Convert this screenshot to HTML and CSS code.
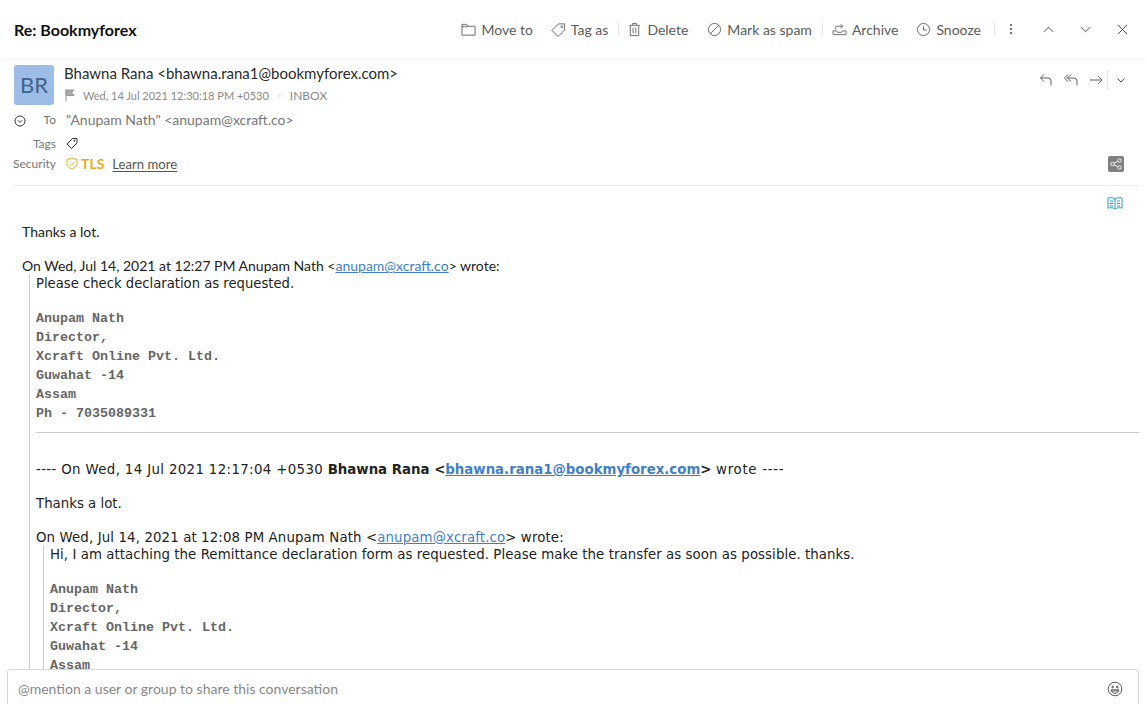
FILE: index.html
```html
<!DOCTYPE html>
<html lang="en">
<head>
<meta charset="utf-8">
<title>Re: Bookmyforex</title>
<link rel="stylesheet" href="styles.css">
</head>
<body>
<header class="topbar">
  <h1 class="subject">Re: Bookmyforex</h1>
  <nav class="actions">
    <span class="action tight"><svg class="ic" viewBox="0 0 16 16"><path d="M1 14V2.500h5l1.500 2H15V14zM1 5h6.500"/></svg>Move to</span>
    <span class="action"><svg class="ic" viewBox="0 0 16 16"><path d="M1 9l7-7h6.500v6.500l-7 7z"/><circle cx="11.500" cy="5" r="1"/></svg>Tag as</span>
    <i class="sep sep-first"></i>
    <span class="action"><svg class="ic" viewBox="0 0 16 16"><path d="M2.500 3.500h11M6 3.500v-2h4v2M3.500 3.500v11h9v-11M6.500 6v6M9.500 6v6"/></svg>Delete</span>
    <span class="action"><svg class="ic" viewBox="0 0 16 16"><circle cx="8" cy="8" r="6.500"/><path d="M3.500 12.500l9-9"/></svg>Mark as spam</span>
    <i class="sep"></i>
    <span class="action tight"><svg class="ic" viewBox="0 0 16 16"><path d="M1 9.500h4l1 1.500h4l1-1.500h4v3a1 1 0 0 1-1 1H2a1 1 0 0 1-1-1zM4 8V5.500a1 1 0 0 1 1-1h6M9 2.500l2.500 2-2.500 2"/></svg>Archive</span>
    <span class="action"><svg class="ic" viewBox="0 0 16 16"><circle cx="8" cy="8" r="6.500"/><path d="M8 4v4.500h3.500"/></svg>Snooze</span>
    <i class="sep sep-last"></i>
    <span class="dots"><b></b><b></b><b></b></span>
    <svg class="nav-ic" viewBox="0 0 12 12"><path d="M1 8.500l5-5 5 5"/></svg>
    <svg class="nav-ic" viewBox="0 0 12 12"><path d="M1 3.500l5 5 5-5"/></svg>
    <svg class="nav-ic" viewBox="0 0 12 12"><path d="M1 1l10 10M11 1L1 11"/></svg>
  </nav>
</header>

<section class="meta">
  <div class="meta-top">
    <div class="avatar">BR</div>
    <div class="sender">
      <div class="from">Bhawna Rana &lt;bhawna.rana1@bookmyforex.com&gt;</div>
      <div class="dateline">
        <svg class="flag" viewBox="0 0 10 13"><path d="M1 0.500v12M1 1h8L6.500 3.500 9 6.500H1z"/></svg>
        <span class="date">Wed, 14 Jul 2021 12:30:18 PM +0530</span><i class="dot"></i><span class="folder">INBOX</span>
      </div>
    </div>
    <div class="replies">
      <svg class="rp" viewBox="0 0 14 14"><path d="M5 1.500L1.500 5 5 8.500M1.500 5H9a3 3 0 0 1 3 3v4.500"/></svg>
      <svg class="rp" viewBox="0 0 14 14"><path d="M4 1.500L.5 5 4 8.500M7 1.500L3.500 5 7 8.500M3.500 5H10a3 3 0 0 1 3 3v4.500"/></svg>
      <svg class="rp" viewBox="0 0 14 14"><path d="M9 3l4 4-4 4M13 7H1"/></svg>
      <i class="rp-sep"></i>
      <svg class="rp-more" viewBox="0 0 10 10"><path d="M1.500 3.500L5 7l3.500-3.500"/></svg>
    </div>
  </div>
  <div class="row row-to">
    <svg class="expand" viewBox="0 0 12 12"><circle cx="6" cy="6" r="5"/><path d="M3.800 5.200L6 7.400l2.200-2.200"/></svg>
    <span class="lab">To</span><span class="to-val">"Anupam Nath" &lt;anupam@xcraft.co&gt;</span>
  </div>
  <div class="row row-tags">
    <span class="lab lab-full">Tags</span>
    <svg class="tag" viewBox="0 0 12 12"><path d="M1 7l5.500-5.500H11V6l-5.500 5.500z"/><circle cx="8.500" cy="3.800" r=".6"/></svg>
  </div>
  <div class="row row-sec">
    <span class="lab lab-full">Security</span>
    <svg class="shield" viewBox="0 0 12 12"><path d="M6 .5l5 1.700V6c0 2.700-2.200 4.400-5 5.500C3.200 10.400 1 8.700 1 6V2.200z"/><path d="M3.800 6l1.700 1.700L8.200 4.800"/></svg>
    <span class="tls">TLS</span><a class="learn">Learn more</a>
    <span class="share"><svg viewBox="0 0 16 16"><circle cx="12" cy="4" r="2"/><circle cx="12" cy="12" r="2"/><circle cx="4" cy="8" r="2"/><path d="M5.800 7l4.400-2.100M5.800 9l4.400 2.100"/></svg></span>
  </div>
</section>

<main class="mail">
  <div class="book-row"><svg class="book" viewBox="0 0 16 14"><path d="M8 3C6 1.500 3.500 1.500 1 2v10c2.500-.5 5-.5 7 1 2-1.500 4.500-1.500 7-1V2c-2.500-.5-5-.5-7 1zM8 3v10M3 5h3M3 7.500h3M3 10h3M10 5h3M10 7.500h3M10 10h3"/></svg></div>
  <p class="line">Thanks a lot.</p>
  <p class="line blank"></p>
  <p class="line">On Wed, Jul 14, 2021 at 12:27 PM Anupam Nath &lt;<a class="link">anupam@xcraft.co</a>&gt; wrote:</p>
  <blockquote class="quote">
    <p class="line wide narrow">Please check declaration as requested.</p>
    <p class="line blank"></p>
    <div class="sig">
      <div>Anupam Nath</div>
      <div>Director,</div>
      <div>Xcraft Online Pvt. Ltd.</div>
      <div>Guwahat -14</div>
      <div>Assam</div>
      <div>Ph - 7035089331</div>
    </div>
    <hr class="rule">
    <p class="line blank"></p>
    <p class="line wide track-l">---- On Wed, 14 Jul 2021 12:17:04 +0530 <b>Bhawna Rana &lt;<a class="link">bhawna.rana1@bookmyforex.com</a>&gt;</b> <span class="track-end">wrote ----</span></p>
    <p class="line blank"></p>
    <p class="line wide">Thanks a lot.</p>
    <p class="line blank"></p>
    <p class="line wide track-m">On Wed, Jul 14, 2021 at 12:08 PM Anupam Nath &lt;<a class="link">anupam@xcraft.co</a>&gt; wrote:</p>
    <blockquote class="quote">
      <p class="line wide track-s">Hi, I am attaching the Remittance declaration form as requested. Please make the transfer as soon as possible. thanks.</p>
      <p class="line blank"></p>
      <div class="sig">
        <div>Anupam Nath</div>
        <div>Director,</div>
        <div>Xcraft Online Pvt. Ltd.</div>
        <div>Guwahat -14</div>
        <div>Assam</div>
      </div>
    </blockquote>
  </blockquote>
</main>

<footer class="composer">
  <span class="mention">@mention a user or group to share this conversation</span>
  <svg class="smile" viewBox="0 0 16 16"><circle cx="8" cy="8" r="6.800"/><circle cx="5.700" cy="6" r=".9"/><circle cx="10.300" cy="6" r=".9"/><path d="M4.200 8.800h7.600c0 2-1.700 3.500-3.800 3.500s-3.800-1.500-3.800-3.500zM4.500 10h7"/></svg>
</footer>
</body>
</html>
```
FILE: styles.css
```css
* { box-sizing: border-box; }
html, body { margin: 0; height: 100%; }
body {
  position: relative;
  height: 704px;
  overflow: hidden;
  background: #fff;
  font-family: Lato, "Liberation Sans", sans-serif;
  color: #222;
}
svg { fill: none; stroke: currentColor; stroke-width: 1; flex: none; display: block; }

.topbar {
  height: 58px;
  display: flex;
  align-items: center;
  justify-content: space-between;
  padding: 0 19px 0 14px;
  box-shadow: 0 2px 4px rgba(0,0,0,.035);
  position: relative;
}
.subject { margin: 0; font-size: 16px; font-weight: 700; color: #111; }
.actions { display: flex; align-items: center; color: #5c5c5c; font-size: 14px; }
.action { display: flex; align-items: center; gap: 5px; margin-right: 19px; white-space: nowrap; }
.tight { margin-right: 18px; }
.ic { width: 15px; height: 15px; color: #666; }
.sep { width: 1px; height: 12px; background: #e3e3e3; margin: 0 9px 0 -9px; }
.sep-first { margin-right: 8px; }
.sep-last { margin: 0 0 0 -6px; }
.dots { display: flex; flex-direction: column; gap: 2px; margin: 0 31px 0 15px; }
.dots b { width: 2px; height: 2px; background: #444; border-radius: 50%; }
.nav-ic { width: 11px; height: 11px; margin-right: 26px; color: #444; }
.nav-ic:last-child { margin-right: 0; }

.meta { padding: 7px 16px 0 14px; }
.meta-top { display: flex; }
.avatar {
  width: 40px; height: 40px; border-radius: 3px;
  background: #9dbce6; color: #41638c;
  font-size: 22px; line-height: 40px; text-align: center;
}
.sender { margin-left: 10px; flex: 1; }
.from { font-size: 15px; line-height: 17px; color: #2a2a2a; }
.dateline { display: flex; align-items: center; line-height: 15px; color: #8a8a8a; margin-top: 6px; }
.date { font-size: 11px; }
.folder { font-size: 12px; }
.flag { width: 10px; height: 13px; margin: 0 8px 0 1px; color: #999; fill: #aaa; }
.dot { width: 3px; height: 3px; border-radius: 50%; background: #e6e6e6; margin: 0 9px; }
.replies { display: flex; align-items: center; height: 30px; color: #606060; }
.rp { width: 14px; height: 14px; margin-left: 11px; }
.rp-sep { width: 1px; height: 20px; background: #e8e8e8; margin: 0 8px 0 4px; }
.rp-more { width: 10px; height: 10px; margin-right: 5px; color: #555; }

.row { display: flex; align-items: center; position: relative; }
.lab { font-size: 12px; color: #777; width: 42px; text-align: right; }
.lab-full { width: 43px; }
.row-to { height: 20px; margin-top: 4px; }
.expand { width: 12px; height: 12px; color: #333; margin-top: 3px; }
.row-to .lab { width: 30px; }
.to-val { font-size: 14px; color: #777; margin-left: 10px; }
.row-tags { height: 20px; margin-top: 4px; margin-left: -1px; }
.tag { width: 12px; height: 12px; margin-left: 10px; color: #333; }
.row-sec { height: 20px; margin-left: -1px; padding-top: 1px; }
.shield { width: 12px; height: 13px; margin-left: 10px; color: #eeb02f; }
.tls { font-size: 14px; font-weight: 700; color: #eeaa1e; margin-left: 3px; }
.learn { font-size: 13.1px; color: #555; margin-left: 8px; text-decoration: underline; text-underline-offset: 2px; }
.share { margin-left: auto; margin-right: 7px; width: 16px; height: 16px; border-radius: 2px; background: #808080; color: #fff; display: block; padding: 1px; }
.share svg { width: 14px; height: 14px; }

.mail {
  margin: 12px 8px 0 14px;
  border-top: 1px solid #eee;
  padding: 10px 0 0 8px;
}
.book-row { display: flex; justify-content: flex-end; height: 15px; margin-bottom: 12px; }
.book { width: 16px; height: 14px; color: #2f9cc4; margin-right: 16px; }
.line { margin: 0; font-size: 14px; line-height: 17px; color: #222; }
.blank { height: 17px; }
.wide { font-family: "DejaVu Sans", Verdana, sans-serif; font-size: 13.33px; line-height: 15px; padding-top: 2px; }
.narrow { font-size: 13.2px; }
.track-l { letter-spacing: .36px; }
.track-l b { letter-spacing: 0; }
.track-end { letter-spacing: .7px; }
.track-m { letter-spacing: .12px; }
.track-s { letter-spacing: .06px; }
.link { color: #3f7fc8; text-decoration: underline; }
.quote { margin: 0 0 0 7px; padding-left: 6px; border-left: 1px solid #ccc; }
.sig { font-family: "Liberation Mono", monospace; font-weight: 700; font-size: 13.33px; line-height: 19px; color: #666; padding-top: 1px; }
.rule { margin: 9px 0 10px; border: 0; border-top: 1px solid #ccc; }

.composer {
  position: absolute;
  left: 7px; right: 8px; bottom: -1px;
  height: 36px;
  background: #fff;
  border: 1px solid #d8d8d8;
  border-radius: 3px 3px 0 0;
  display: flex;
  align-items: center;
  justify-content: space-between;
  padding: 3px 15px 0 10px;
}
.mention { font-size: 14px; color: #888; }
.smile { width: 16px; height: 16px; color: #555; }
```
